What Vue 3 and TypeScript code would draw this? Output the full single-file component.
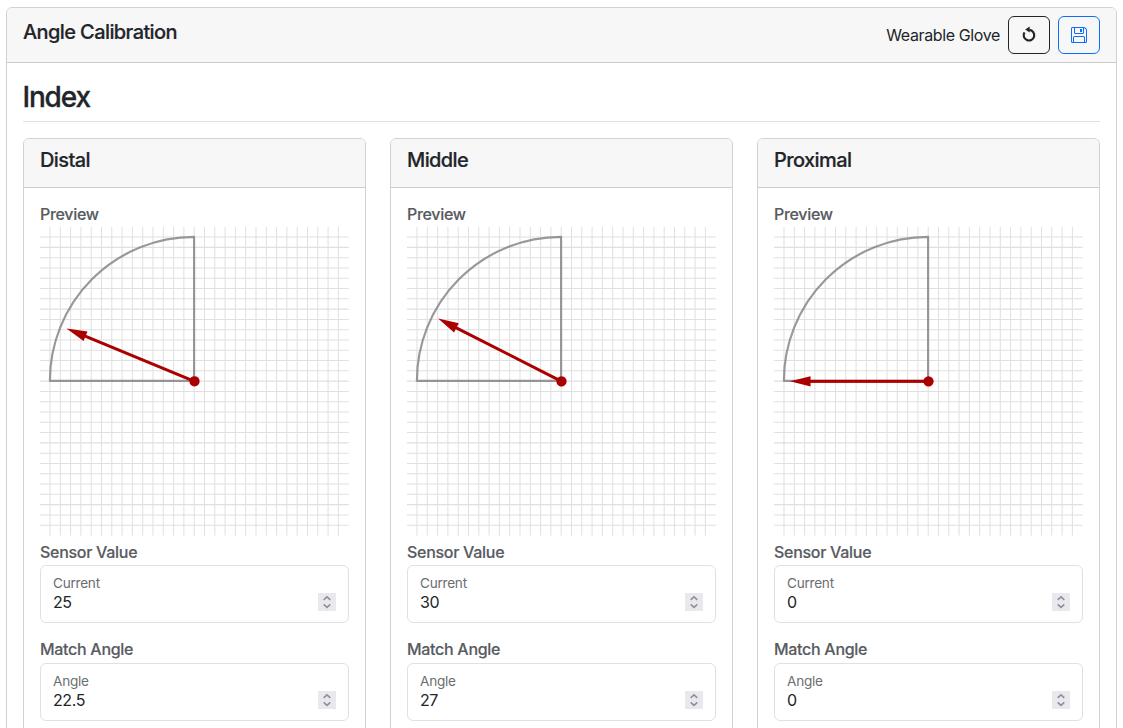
<script setup lang="ts">
interface Joint {
  name: string
  sensor: number
  angle: number
}

const device = 'Wearable Glove'
const joints: Joint[] = [
  { name: 'Distal', sensor: 25, angle: 22.5 },
  { name: 'Middle', sensor: 30, angle: 27 },
  { name: 'Proximal', sensor: 0, angle: 0 },
]

// 29 inner grid lines on a 300 x 300 canvas
const gridPath = Array.from({ length: 29 }, (_, i) => (i + 1) * 10)
  .map((p) => `M${p} 0V300M0 ${p}H300`)
  .join('')
</script>

<template>
  <main class="page">
    <section class="panel">
      <header class="panel-head">
        <h5 class="title">Angle Calibration</h5>
        <div class="actions">
          <span class="device">{{ device }}</span>
          <button class="btn dark" type="button" aria-label="Reset">
            <svg width="16" height="18" viewBox="-8 -9 16 18">
              <path d="M0.3 -5.1A5.3 5.3 0 1 1 -4.5 -2.7" fill="none" stroke="currentColor" stroke-width="2.2" />
              <path d="M-3.8 -5.4L0.7 -8.4V-2.5Z" fill="currentColor" />
            </svg>
          </button>
          <button class="btn blue" type="button" aria-label="Save">
            <svg width="16" height="16" viewBox="0 0 16 16" fill="currentColor">
              <path d="M11 2H9v3h2z" />
              <path d="M1.5 0h11.586a1.5 1.5 0 0 1 1.06.44l1.415 1.414A1.5 1.5 0 0 1 16 2.914V14.5a1.5 1.5 0 0 1-1.5 1.5h-13A1.5 1.5 0 0 1 0 14.5v-13A1.5 1.5 0 0 1 1.5 0M1 1.5v13a.5.5 0 0 0 .5.5H2v-4.5A1.5 1.5 0 0 1 3.5 9h9a1.5 1.5 0 0 1 1.5 1.5V15h.5a.5.5 0 0 0 .5-.5V2.914a.5.5 0 0 0-.146-.353l-1.415-1.415A.5.5 0 0 0 13.086 1H13v4.5A1.5 1.5 0 0 1 11.5 7h-7A1.5 1.5 0 0 1 3 5.5V1H1.5a.5.5 0 0 0-.5.5m3 4a.5.5 0 0 0 .5.5h7a.5.5 0 0 0 .5-.5V1H4zM3 15h10v-4.5a.5.5 0 0 0-.5-.5h-9a.5.5 0 0 0-.5.5z" />
            </svg>
          </button>
        </div>
      </header>

      <div class="panel-body">
        <h3 class="finger">Index</h3>
        <div class="joints">
          <article v-for="joint in joints" :key="joint.name" class="joint">
            <header class="joint-head">
              <h5 class="title">{{ joint.name }}</h5>
            </header>
            <div class="joint-body">
              <div class="label first">Preview</div>
              <svg class="preview" viewBox="0 0 300 300" preserveAspectRatio="none">
                <path :d="gridPath" transform="translate(-0.3 -0.2)" stroke="#e0e0e0" stroke-width="1" fill="none" />
                <path d="M149.6 149.6H9.6A140 140 0 0 1 149.6 9.6Z" fill="none" stroke="#808080" stroke-opacity="0.8" stroke-width="2.1" stroke-linejoin="round" />
                <g :transform="`translate(150 150) rotate(${joint.angle})`" fill="#aa0000">
                  <rect x="-120" y="-1.5" width="120" height="3" />
                  <path d="M-134.5 0L-114.5 -5V5Z" />
                  <circle r="5" />
                </g>
              </svg>
              <div class="label">Sensor Value</div>
              <div class="field">
                <div class="field-name">Current</div>
                <div class="field-row">
                  <span>{{ joint.sensor }}</span>
                  <svg class="spin" width="18" height="18" viewBox="0 0 18 18">
                    <path d="M5.7 6.9L9 3.9L12.3 6.9M5.7 11.3L9 14.3L12.3 11.3" />
                  </svg>
                </div>
              </div>
              <div class="label match">Match Angle</div>
              <div class="field">
                <div class="field-name">Angle</div>
                <div class="field-row">
                  <span>{{ joint.angle }}</span>
                  <svg class="spin" width="18" height="18" viewBox="0 0 18 18">
                    <path d="M5.7 6.9L9 3.9L12.3 6.9M5.7 11.3L9 14.3L12.3 11.3" />
                  </svg>
                </div>
              </div>
            </div>
          </article>
        </div>
      </div>
    </section>
  </main>
</template>

<style>
body {
  background: #fff;
  overflow: hidden;
}
</style>

<style scoped>
* {
  box-sizing: border-box;
}
.page {
  height: 728px;
  overflow: hidden;
  padding: 7px 6px 0;
  font-family: Inter, "Liberation Sans", sans-serif;
  font-size: 16px;
  line-height: 24px;
  color: #212529;
}
.panel {
  height: 900px;
  border: 1px solid #d2d2d2;
  border-radius: 6px;
  overflow: hidden;
}
.panel-head {
  height: 55px;
  padding: 8px 16px;
  display: flex;
  justify-content: space-between;
  background: #f7f7f7;
  border-bottom: 1px solid #cbcbcb;
}
.title {
  margin: 0;
  font-size: 20px;
  line-height: 24px;
  font-weight: 500;
  letter-spacing: -0.6px;
  -webkit-text-stroke: 0.2px currentColor;
}
.panel-head .title {
  margin-top: 4px;
}
.actions {
  display: flex;
  align-items: center;
  gap: 8px;
}
.device {
  letter-spacing: -0.38px;
}
.btn {
  width: 42px;
  height: 38px;
  padding: 0;
  display: flex;
  align-items: center;
  justify-content: center;
  background: transparent;
  border: 1px solid currentColor;
  border-radius: 6px;
}
.dark {
  color: #212529;
}
.blue {
  color: #0d6efd;
}
.panel-body {
  padding: 16px;
}
.finger {
  height: 43px;
  margin: 0 0 16px;
  padding-top: 1px;
  border-bottom: 1px solid #dee2e6;
  font-size: 28px;
  line-height: 34px;
  font-weight: 500;
  letter-spacing: -1.15px;
  text-indent: -0.6px;
  -webkit-text-stroke: 0.3px currentColor;
}
.joints {
  display: grid;
  grid-template-columns: repeat(3, 1fr);
  gap: 24px;
}
.joint {
  height: 800px;
  border: 1px solid #d2d2d2;
  border-radius: 6px;
  overflow: hidden;
}
.joint-head {
  height: 49px;
  padding: 9px 16px;
  background: #f7f7f7;
  border-bottom: 1px solid #cbcbcb;
}
.joint-body {
  padding: 14px 16px;
}
.label {
  height: 24px;
  font-weight: 500;
  color: #585b5f;
  letter-spacing: -0.29px;
  -webkit-text-stroke: 0.15px currentColor;
}
.label.first {
  height: 25px;
}
.preview {
  display: block;
  width: 309px;
  height: 308.7px;
  margin-bottom: 4.3px;
}
.field {
  height: 58px;
  margin-top: 1px;
  padding: 7px 12px;
  border: 1px solid #dee2e6;
  border-radius: 6px;
}
.label.match {
  height: 25px;
  margin-top: 14px;
}
.field-name {
  font-size: 13.6px;
  line-height: 20px;
  color: #6b6e71;
  letter-spacing: -0.25px;
}
.field-row {
  display: flex;
  justify-content: space-between;
  align-items: center;
  height: 18px;
  letter-spacing: -0.4px;
}
.spin {
  background: #e9e9ed;
  fill: none;
  stroke: #8f8f9d;
  stroke-width: 1.6;
}
</style>
